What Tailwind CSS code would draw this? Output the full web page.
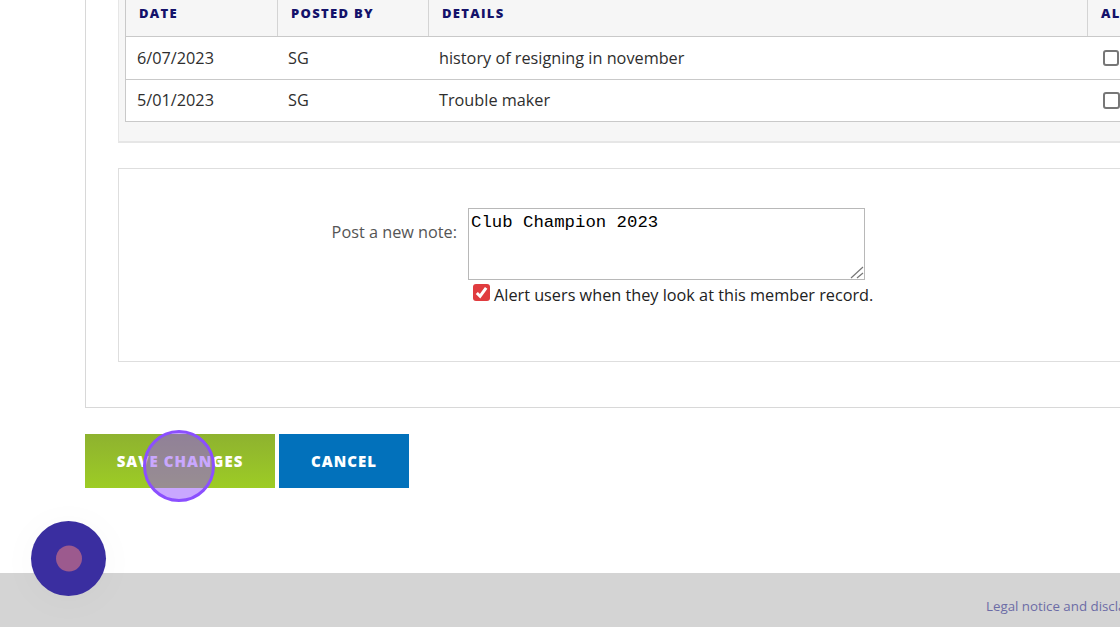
<!DOCTYPE html>
<html lang="en">
<head>
    <meta charset="UTF-8">
    <meta name="viewport" content="width=device-width, initial-scale=1.0">
    <title>Member notes</title>
    <script src="https://cdn.jsdelivr.net/npm/@tailwindcss/browser@4"></script>
</head>
<body class="bg-white">
    <div class="relative w-[1120px] h-[627px] overflow-hidden font-['Open_Sans',sans-serif] text-[16.25px] text-[#2e2e2e]">

        <!-- Main panel -->
        <div class="ml-[85px] w-[1100px] h-[408px] border-l border-b border-[#d8d8d8] pl-[32px]">

            <!-- Existing notes -->
            <div class="w-[1100px] h-[143px] bg-[#f6f6f6] border-l border-b-2 border-[#e6e6e6] pl-[6px]">
                <div class="w-[1090px] bg-white border-l border-b border-[#c9c9c9]">
                    <div class="grid grid-cols-[152px_151px_659px_128px] h-[37px] bg-[#f6f6f6] border-b border-[#c9c9c9] text-[13px] font-extrabold tracking-[1.3px] text-[#14126a] leading-[26px]">
                        <div class="pl-[13px] border-r border-[#d4d4d4]">DATE</div>
                        <div class="pl-[13px] border-r border-[#d4d4d4]">POSTED BY</div>
                        <div class="pl-[13px] border-r border-[#d4d4d4]">DETAILS</div>
                        <div class="pl-[13px]">ALERT</div>
                    </div>
                    <div class="grid grid-cols-[152px_151px_659px_128px] h-[43px] items-center border-b border-[#c9c9c9]">
                        <div class="pl-[11px]">6/07/2023</div>
                        <div class="pl-[10px]">SG</div>
                        <div class="pl-[10px]">history of resigning in november</div>
                        <div class="pl-[15px] flex"><input type="checkbox" class="appearance-none w-[16px] h-[16px] rounded-[3px] border-2 border-[#777] bg-white"></div>
                    </div>
                    <div class="grid grid-cols-[152px_151px_659px_128px] h-[41px] items-center">
                        <div class="pl-[11px] -translate-y-[0.5px]">5/01/2023</div>
                        <div class="pl-[10px] -translate-y-[0.5px]">SG</div>
                        <div class="pl-[10px] -translate-y-[0.5px]">Trouble maker</div>
                        <div class="pl-[15px] flex"><input type="checkbox" class="appearance-none w-[17px] h-[17px] rounded-[3px] border-2 border-[#777] bg-white"></div>
                    </div>
                </div>
            </div>

            <!-- New note -->
            <div class="mt-[25px] w-[1100px] h-[194px] border border-[#dedede] flex pt-[39px]">
                <label class="w-[338px] text-right text-[#555] leading-[48px]">Post a new note:</label>
                <div class="ml-[11px]">
                    <div class="relative w-[397px] h-[72px]">
                        <textarea readonly class="block w-full h-full resize-none border border-[#b8b8b8] pt-[4px] px-[2px] font-['Liberation_Mono',monospace] text-[17.33px] leading-[20px] text-black">Club Champion 2023</textarea>
                        <svg viewBox="0 0 14 14" class="absolute right-[1px] bottom-[1px] w-[14px] h-[14px]" fill="none" stroke="#777" stroke-width="1.2"><path d="M1 13L13 2M7 13l6-5"/></svg>
                    </div>
                    <div class="flex items-start mt-[4px] ml-[5px] text-[#222] whitespace-nowrap">
                        <span class="w-[17px] h-[17px] rounded-[3px] bg-[#e03c3f] flex items-center justify-center">
                            <svg viewBox="0 0 16 16" class="w-[15px] h-[15px]" fill="none" stroke="white" stroke-width="3.2"><path d="M3 8.5l3.5 3.5L13 3"/></svg>
                        </span>
                        <span class="ml-[4px] leading-[23px]">Alert users when they look at this member record.</span>
                    </div>
                </div>
            </div>
        </div>

        <!-- Buttons -->
        <div class="ml-[85px] mt-[26px] flex gap-[4px] text-[15px] font-extrabold tracking-[1px] text-white">
            <div class="w-[190px] h-[54px] flex items-center justify-center bg-gradient-to-b from-[#8eb22f] to-[#9dcc24]">SAVE CHANGES</div>
            <div class="w-[130px] h-[54px] flex items-center justify-center bg-[#0271bb]">CANCEL</div>
        </div>

        <!-- Footer -->
        <div class="mt-[85px] h-[54px] bg-[#d4d4d4] pl-[986px] pt-[22px] text-[13.3px] leading-[22px] text-[#6c6ca6] whitespace-nowrap">Legal notice and disclaimer</div>

        <!-- Click marker over the save button -->
        <div class="absolute left-[143px] top-[430px] w-[72px] h-[72px] rounded-full border-[3px] border-[#8b4fff] bg-[#9350ff]/50"></div>

        <!-- Floating widget -->
        <div class="absolute left-[31px] top-[521px] w-[75px] h-[75px] rounded-full bg-[#3a2ea0] shadow-[0_4px_40px_rgba(0,0,0,0.03)] flex items-center justify-center">
            <div class="w-[26px] h-[26px] rounded-full bg-[#9c5a8e] -translate-y-[0.5px]"></div>
        </div>
    </div>
</body>
</html>
